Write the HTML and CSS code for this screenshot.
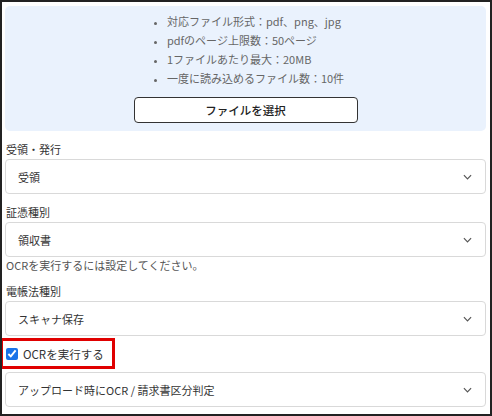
FILE: index.html
```html
<!DOCTYPE html>
<html lang="ja">
<head>
    <meta charset="UTF-8">
    <meta name="viewport" content="width=device-width, initial-scale=1.0">
    <title>証憑アップロード</title>
    <link rel="stylesheet" href="styles.css">
</head>
<body>

<div class="frame">
    <div class="upload-box">
        <ul class="upload-notes">
            <li>対応ファイル形式：pdf、png、jpg</li>
            <li>pdfのページ上限数：50ページ</li>
            <li>1ファイルあたり最大：20MB</li>
            <li>一度に読み込めるファイル数：10件</li>
        </ul>
        <div>
            <button class="file-button" type="button">ファイルを選択</button>
        </div>
    </div>

    <div class="field">
        <label class="field-label">受領・発行</label>
        <div class="select-box">
            <span>受領</span>
            <svg class="chevron" viewBox="0 0 10 6"><path d="M1 1l4 4 4-4"/></svg>
        </div>
    </div>

    <div class="field">
        <label class="field-label">証憑種別</label>
        <div class="select-box">
            <span>領収書</span>
            <svg class="chevron" viewBox="0 0 10 6"><path d="M1 1l4 4 4-4"/></svg>
        </div>
        <p class="field-help">OCRを実行するには設定してください。</p>
    </div>

    <div class="field">
        <label class="field-label">電帳法種別</label>
        <div class="select-box">
            <span>スキャナ保存</span>
            <svg class="chevron" viewBox="0 0 10 6"><path d="M1 1l4 4 4-4"/></svg>
        </div>
    </div>

    <label class="ocr-check">
        <input type="checkbox" checked>
        <span>OCRを実行する</span>
    </label>

    <div class="select-box ocr-mode">
        <span>アップロード時にOCR / 請求書区分判定</span>
        <svg class="chevron" viewBox="0 0 10 6"><path d="M1 1l4 4 4-4"/></svg>
    </div>
</div>

</body>
</html>
```

FILE: styles.css
```css
body {
    margin: 0;
    font-family: "Noto Sans CJK JP", "Noto Sans", sans-serif;
    font-size: 11px;
    color: #333;
    background-color: #fff;
}

.frame {
    width: 492px;
    height: 416px;
    box-sizing: border-box;
    border: 2px solid #222;
    padding: 4px 4px 0 3px;
    overflow: hidden;
}

.upload-box {
    background-color: #eaf2fd;
    border-radius: 5px;
    padding: 6px 0 8px;
    text-align: center;
}

.upload-notes {
    display: inline-block;
    margin: 0;
    padding-left: 20px;
    text-align: left;
    color: #666;
    line-height: 19px;
}

.upload-notes li::marker {
    font-size: 9px;
}

.file-button {
    display: block;
    margin: 9px auto 0;
    width: 224px;
    height: 26px;
    background-color: #fff;
    border: 1px solid #333;
    border-radius: 4px;
    font-family: inherit;
    font-size: 11.5px;
    font-weight: 500;
    color: #222;
}

.field {
    margin-top: 8px;
}

.field-label {
    display: block;
    line-height: 20px;
    color: #333;
    padding-left: 1px;
}

.select-box {
    display: flex;
    align-items: center;
    justify-content: space-between;
    height: 35px;
    box-sizing: border-box;
    padding: 0 13px 0 12px;
    border: 1px solid #d9d9d9;
    border-radius: 4px;
    color: #333;
}

.chevron {
    width: 9px;
    height: 6px;
    fill: none;
    stroke: #555;
    stroke-width: 1.3;
}

.field-help {
    margin: 0;
    line-height: 16px;
    color: #555;
    padding-left: 1px;
}

.ocr-check {
    display: inline-flex;
    align-items: center;
    gap: 5px;
    margin: 2px 0 0 -5px;
    height: 31px;
    box-sizing: border-box;
    padding: 0 8px 0 3px;
    border: 3px solid #e00000;
    color: #333;
    font-size: 11.5px;
}

.ocr-check input {
    margin: 0;
    width: 12px;
    height: 12px;
    accent-color: #1a73e8;
}

.ocr-mode {
    margin-top: 3px;
}
```
